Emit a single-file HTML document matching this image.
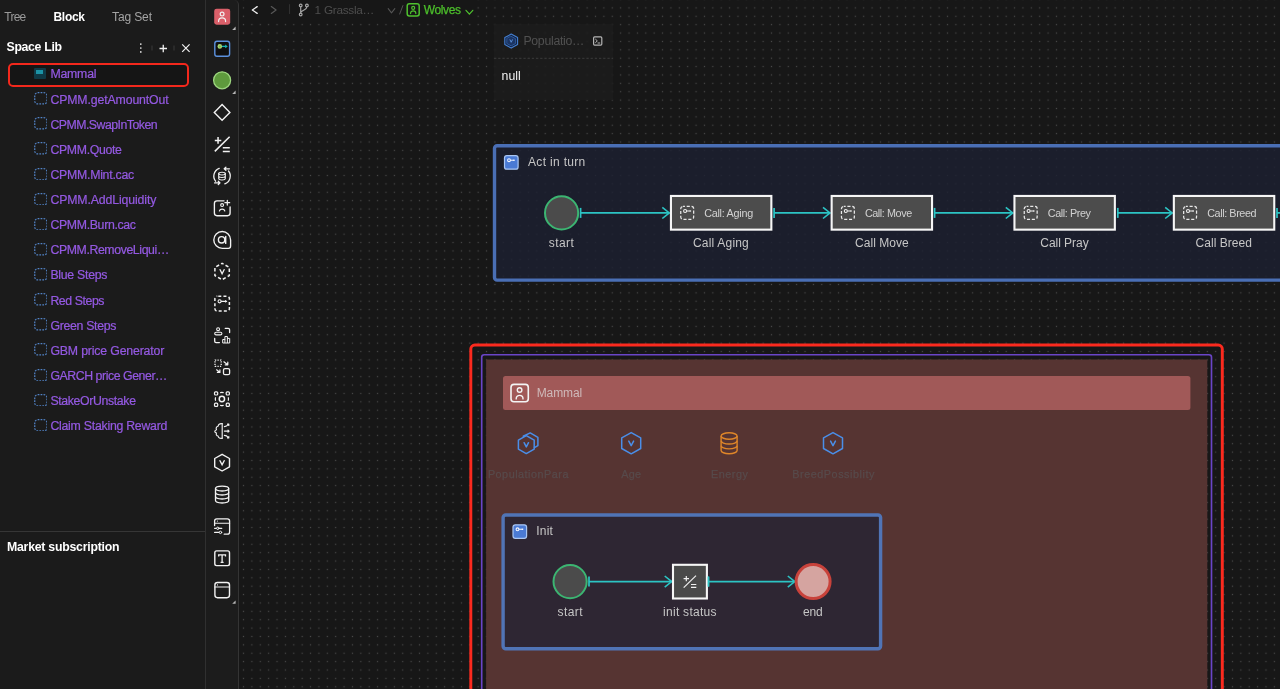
<!DOCTYPE html>
<html><head>
<meta charset="utf-8">
<title>Space Lib</title>
<style>
*{box-sizing:border-box;margin:0;padding:0}
html,body{width:1280px;height:689px;overflow:hidden;background:#181818;font-family:"Liberation Sans",sans-serif;color:#fff}
.abs{position:absolute}
#canvas{position:absolute;left:239px;top:0;width:1041px;height:689px;background-color:#171717}
#left{position:absolute;left:0;top:0;width:206px;height:689px;background:#1b1b1b;border-right:1px solid #303030}
#tool{position:absolute;left:206px;top:0;width:33px;height:689px;background:#1c1c1c;border-right:1px solid #343434;border-top-right-radius:5px}
.tab{position:absolute;top:8.84px;font-size:12px;line-height:16px;color:#9a9a9a;white-space:nowrap}
.li{position:absolute;left:50.4px;font-size:12.3px;line-height:16px;color:#9459e2;-webkit-text-stroke:0.22px #9459e2;white-space:nowrap}
.dsq{position:absolute;left:33.7px;width:13.7px;height:12.7px}
.t{position:absolute;white-space:nowrap}
.lbl{position:absolute;white-space:nowrap;font-size:13px;line-height:16px;color:#d6d6d6;text-align:center;transform:translateX(-50%)}
.call{position:absolute;height:35px;background:#4b4b4b;border:2px solid #fff}
.call span{position:absolute;top:9px;font-size:11px;line-height:14px;color:#e0e0e0;white-space:nowrap}
</style>
</head>
<body>
<div id="root" style="position:absolute;left:0;top:0;width:1280px;height:689px;will-change:transform">
<div id="canvas"><svg width="1041" height="689" viewBox="239 0 1041 689" style="position:absolute;left:0;top:0">
<defs><pattern id="dots" x="239.31" y="3.71" width="8.381" height="8.381" patternUnits="userSpaceOnUse"><rect x="3.6" y="3.6" width="1.18" height="1.18" fill="#4b4b4b"></rect></pattern></defs>
<rect x="239" y="0" width="1041" height="689" fill="url(#dots)"></rect></svg></div>

<!-- LEFT PANEL -->
<div id="left">
  <div class="tab" style="left: 4.3px; letter-spacing: -0.745px;">Tree</div>
  <div class="tab" style="left: 53.5px; color: rgb(255, 255, 255); font-weight: bold; letter-spacing: -0.297px;">Block</div>
  <div class="tab" style="left: 112px; color: rgb(164, 164, 164); letter-spacing: -0.117px;">Tag Set</div>
  <div class="t" style="left: 6.5px; top: 39.24px; font-size: 12.3px; line-height: 16px; font-weight: bold; letter-spacing: -0.324px;">Space Lib</div>
  <!-- LEFT-ICONS -->
  <svg class="abs" style="left:136px;top:40px;width:60px;height:16px" viewBox="0 0 60 16">
    <g fill="#e8e8e8"><circle cx="4.8" cy="4.1" r="0.85"></circle><circle cx="4.8" cy="8" r="0.85"></circle><circle cx="4.8" cy="11.9" r="0.85"></circle></g>
    <path d="M16 5.5V10.5M38 5.5V10.5" stroke="#3a3a3a" stroke-width="1"></path>
    <path d="M23.5 8.5H31M27.25 4.7V12.3" stroke="#f0f0f0" stroke-width="1.3" fill="none"></path>
    <path d="M46.2 4.4L53.6 11.8M53.6 4.4L46.2 11.8" stroke="#f0f0f0" stroke-width="1.2" fill="none"></path>
  </svg>
  <!-- LIST -->
  <div class="abs" style="left:8px;top:63px;width:181px;height:24px;border:2px solid #f3281c;border-radius:5px;background:#151515"></div>
  <div class="abs" style="left:34px;top:68.3px;width:12px;height:11px;background:#0f3a46;border-radius:1px"><div class="abs" style="left:2px;top:1.5px;width:7px;height:4px;background:#1c93a6"></div></div>
  <div class="li" style="top: 66.3px; letter-spacing: -0.208px;">Mammal</div>
  <svg class="dsq" style="top:92.1px" viewBox="0 0 13.7 12.7"><rect x="0.75" y="0.75" width="12.2" height="11.2" rx="2.9" fill="none" stroke="#5283c6" stroke-width="1.25" stroke-dasharray="1.75 1.2"></rect></svg>
  <div class="li" style="top: 91.5px; letter-spacing: -0.124px;">CPMM.getAmountOut</div>
  <svg class="dsq" style="top:117.3px" viewBox="0 0 13.7 12.7"><rect x="0.75" y="0.75" width="12.2" height="11.2" rx="2.9" fill="none" stroke="#5283c6" stroke-width="1.25" stroke-dasharray="1.75 1.2"></rect></svg>
  <div class="li" style="top: 116.6px; letter-spacing: -0.502px;">CPMM.SwapInToken</div>
  <svg class="dsq" style="top:142.4px" viewBox="0 0 13.7 12.7"><rect x="0.75" y="0.75" width="12.2" height="11.2" rx="2.9" fill="none" stroke="#5283c6" stroke-width="1.25" stroke-dasharray="1.75 1.2"></rect></svg>
  <div class="li" style="top: 141.7px; letter-spacing: -0.332px;">CPMM.Quote</div>
  <svg class="dsq" style="top:167.5px" viewBox="0 0 13.7 12.7"><rect x="0.75" y="0.75" width="12.2" height="11.2" rx="2.9" fill="none" stroke="#5283c6" stroke-width="1.25" stroke-dasharray="1.75 1.2"></rect></svg>
  <div class="li" style="top: 166.9px; letter-spacing: -0.248px;">CPMM.Mint.cac</div>
  <svg class="dsq" style="top:192.7px" viewBox="0 0 13.7 12.7"><rect x="0.75" y="0.75" width="12.2" height="11.2" rx="2.9" fill="none" stroke="#5283c6" stroke-width="1.25" stroke-dasharray="1.75 1.2"></rect></svg>
  <div class="li" style="top: 192px; letter-spacing: -0.124px;">CPMM.AddLiquidity</div>
  <svg class="dsq" style="top:217.8px" viewBox="0 0 13.7 12.7"><rect x="0.75" y="0.75" width="12.2" height="11.2" rx="2.9" fill="none" stroke="#5283c6" stroke-width="1.25" stroke-dasharray="1.75 1.2"></rect></svg>
  <div class="li" style="top: 217.1px; letter-spacing: -0.326px;">CPMM.Burn.cac</div>
  <svg class="dsq" style="top:242.9px" viewBox="0 0 13.7 12.7"><rect x="0.75" y="0.75" width="12.2" height="11.2" rx="2.9" fill="none" stroke="#5283c6" stroke-width="1.25" stroke-dasharray="1.75 1.2"></rect></svg>
  <div class="li" style="top: 242.2px; letter-spacing: -0.391px;">CPMM.RemoveLiqui…</div>
  <svg class="dsq" style="top:268.0px" viewBox="0 0 13.7 12.7"><rect x="0.75" y="0.75" width="12.2" height="11.2" rx="2.9" fill="none" stroke="#5283c6" stroke-width="1.25" stroke-dasharray="1.75 1.2"></rect></svg>
  <div class="li" style="top: 267.4px; letter-spacing: -0.265px;">Blue Steps</div>
  <svg class="dsq" style="top:293.2px" viewBox="0 0 13.7 12.7"><rect x="0.75" y="0.75" width="12.2" height="11.2" rx="2.9" fill="none" stroke="#5283c6" stroke-width="1.25" stroke-dasharray="1.75 1.2"></rect></svg>
  <div class="li" style="top: 292.5px; letter-spacing: -0.415px;">Red Steps</div>
  <svg class="dsq" style="top:318.3px" viewBox="0 0 13.7 12.7"><rect x="0.75" y="0.75" width="12.2" height="11.2" rx="2.9" fill="none" stroke="#5283c6" stroke-width="1.25" stroke-dasharray="1.75 1.2"></rect></svg>
  <div class="li" style="top: 317.6px; letter-spacing: -0.305px;">Green Steps</div>
  <svg class="dsq" style="top:343.4px" viewBox="0 0 13.7 12.7"><rect x="0.75" y="0.75" width="12.2" height="11.2" rx="2.9" fill="none" stroke="#5283c6" stroke-width="1.25" stroke-dasharray="1.75 1.2"></rect></svg>
  <div class="li" style="top: 342.8px; letter-spacing: -0.165px;">GBM price Generator</div>
  <svg class="dsq" style="top:368.6px" viewBox="0 0 13.7 12.7"><rect x="0.75" y="0.75" width="12.2" height="11.2" rx="2.9" fill="none" stroke="#5283c6" stroke-width="1.25" stroke-dasharray="1.75 1.2"></rect></svg>
  <div class="li" style="top: 367.9px; letter-spacing: -0.434px;">GARCH price Gener…</div>
  <svg class="dsq" style="top:393.7px" viewBox="0 0 13.7 12.7"><rect x="0.75" y="0.75" width="12.2" height="11.2" rx="2.9" fill="none" stroke="#5283c6" stroke-width="1.25" stroke-dasharray="1.75 1.2"></rect></svg>
  <div class="li" style="top: 393px; letter-spacing: -0.355px;">StakeOrUnstake</div>
  <svg class="dsq" style="top:418.8px" viewBox="0 0 13.7 12.7"><rect x="0.75" y="0.75" width="12.2" height="11.2" rx="2.9" fill="none" stroke="#5283c6" stroke-width="1.25" stroke-dasharray="1.75 1.2"></rect></svg>
  <div class="li" style="top: 418.2px; letter-spacing: -0.245px;">Claim Staking Reward</div>
  <!-- /LIST -->
  <div class="abs" style="left:0;top:531px;width:205px;height:1px;background:#363636"></div>
  <div class="t" style="left: 7px; top: 538.74px; font-size: 12.3px; line-height: 16px; font-weight: bold; letter-spacing: -0.242px;">Market subscription</div>
</div>

<!-- TOOLBAR -->
<div id="tool">
<!-- TOOL-ICONS -->
<svg class="abs" style="left:0;top:0;width:33px;height:689px" viewBox="206 0 33 689" fill="none" stroke="#f2f2f2" stroke-width="1.35" stroke-linecap="round" stroke-linejoin="round">
  <!-- 1 person red -->
  <rect x="214.2" y="8.7" width="16" height="16" rx="2.4" fill="#da5f69" stroke="none"></rect>
  <circle cx="222.1" cy="14.1" r="1.9" stroke-width="1.2"></circle>
  <path d="M218.6 21.6v-0.4a3.5 3.3 0 0 1 7 0v0.4" stroke-width="1.2"></path>
  <path d="M235.6 26.6V29.9H232.2Z" fill="#b5b5b5" stroke="none"></path>
  <!-- 2 blue box -->
  <rect x="214.8" y="41.3" width="14.8" height="14.9" rx="2.2" fill="#101010" stroke="#5c91de" stroke-width="1.4"></rect>
  <path d="M221.5 46.4H226" stroke="#17b6b6" stroke-width="1.3" stroke-linecap="butt"></path>
  <path d="M225.2 44.6L227.8 46.4L225.2 48.2Z" fill="#17b6b6" stroke="none"></path>
  <circle cx="219.8" cy="46.4" r="2.3" fill="#a9d873" stroke="none"></circle>
  <circle cx="219.8" cy="46.4" r="1" fill="#7fb34c" stroke="none"></circle>
  <!-- 3 green circle -->
  <circle cx="222.1" cy="80.3" r="8.5" fill="#5e9a3d" stroke="#9dd67f" stroke-width="1.3"></circle>
  <path d="M235.6 90.6V93.9H232.2Z" fill="#b5b5b5" stroke="none"></path>
  <!-- 4 diamond -->
  <path d="M222.1 104.6L229.9 112.4L222.1 120.2L214.3 112.4Z" stroke-width="1.4" stroke-linejoin="miter"></path>
  <!-- 5 plus slash equal -->
  <g stroke-width="1.5" stroke-linecap="butt">
  <path d="M214.8 151.4L229.6 136.8"></path>
  <path d="M214.8 140.4H221.3M218.05 137.1V143.7"></path>
  <path d="M222.8 147.8H229.8M222.8 151.4H229.8"></path>
  </g>
  <!-- 6 coin cycle -->
  <g stroke-width="1.3">
  <path d="M219.2 168.3A8.3 8.3 0 0 0 215.6 181.2"></path>
  <path d="M224.8 183.9A8.3 8.3 0 0 0 228.5 171"></path>
  <path d="M229.4 168.8H224.4M225.9 167.2L224.2 168.8L225.9 170.4"></path>
  <path d="M214.6 182.9H219.8M218.3 181.3L220 182.9L218.3 184.5"></path>
  <ellipse cx="222" cy="173.6" rx="3.3" ry="1.4" stroke-width="1.1"></ellipse>
  <path d="M218.7 173.6V178.6A3.3 1.4 0 0 0 225.3 178.6V173.6M218.7 176.1A3.3 1.4 0 0 0 225.3 176.1" stroke-width="1.1"></path>
  </g>
  <!-- 7 person plus -->
  <path d="M224 200.8H217A2.6 2.6 0 0 0 214.4 203.4V213.1A2.6 2.6 0 0 0 217 215.7H227.5A2.6 2.6 0 0 0 230.1 213.1V206.8"></path>
  <path d="M224.9 202.7H229.7M227.3 200.3V205.1" stroke-width="1.2"></path>
  <circle cx="222.1" cy="205.1" r="1.45" stroke-width="1.1"></circle>
  <path d="M219.4 211A2.8 2.6 0 0 1 224.8 211" stroke-width="1.2"></path>
  <!-- 8 at -->
  <path d="M222.2 231.5A8.4 8.4 0 1 0 222.2 248.3H228.4A2.2 2.2 0 0 0 230.6 246.1V239.9A8.4 8.4 0 0 0 222.2 231.5Z"></path>
  <circle cx="221.6" cy="239.8" r="3.2" stroke-width="1.4"></circle>
  <path d="M225.7 236.4V243.4" stroke-width="1.4"></path>
  <!-- 9 dashed hex v -->
  <path d="M222.1 263.3L229.3 267.4V275.6L222.1 279.7L214.9 275.6V267.4Z" stroke-dasharray="3.3 2.25" stroke-dashoffset="1.6" stroke-width="1.5" stroke-linecap="butt"></path>
  <path d="M220.1 269.7L222.1 273.7L224.1 269.7" stroke-width="1.3" stroke-linejoin="miter"></path>
  <!-- 10 dashed box key -->
  <rect x="214.9" y="296.2" width="14.5" height="14.9" rx="2.4" stroke-dasharray="3 2.15" stroke-dashoffset="-1" stroke-width="1.5" stroke-linecap="butt"></rect>
  <circle cx="219.6" cy="301.3" r="1.55" stroke-width="1.1"></circle>
  <path d="M221.3 301.3H226.6M225.6 300.6V302" stroke-width="1.2"></path>
  <!-- 11 person chart -->
  <g stroke-width="1.3">
  <circle cx="218.1" cy="329.2" r="1.45" stroke-width="1.1"></circle>
  <rect x="214.7" y="332.2" width="7.2" height="2.7" rx="1.35" stroke-width="1.1"></rect>
  <path d="M225.2 328.3H228.2A1.4 1.4 0 0 1 229.6 329.7V332.6"></path>
  <path d="M214.7 338.4V341.2A1.4 1.4 0 0 0 216.1 342.6H219.4"></path>
  <path d="M222.7 342.6V339.5H224.9V336.5H227.4V338.4H229.7V342.6ZM224.9 339.5V342.6M227.4 338.4V342.6" stroke-width="1"></path>
  </g>
  <!-- 12 dots arrows -->
  <rect x="215" y="360.1" width="6.2" height="6.2" stroke-dasharray="1.25 1.23" stroke-width="1.3" stroke-linecap="butt"></rect>
  <path d="M223.9 361.8L227.4 364.4M227.8 362.2V364.8H225.2" stroke-width="1.2"></path>
  <path d="M216.6 369.8L219.4 371.9M219.9 369.9V372.4H217.4" stroke-width="1.2"></path>
  <rect x="223.5" y="368.6" width="6.1" height="6.1" rx="1.5" stroke-width="1.3"></rect>
  <!-- 13 gear -->
  <circle cx="221.9" cy="399" r="2.65" stroke-width="1.5"></circle>
  <g stroke-width="1.2">
  <rect x="214.5" y="391.8" width="3.2" height="3.2" rx="1"></rect><rect x="226.2" y="391.8" width="3.2" height="3.2" rx="1"></rect>
  <rect x="214.5" y="403.2" width="3.2" height="3.2" rx="1"></rect><rect x="226.2" y="403.2" width="3.2" height="3.2" rx="1"></rect>
  <path d="M220.6 392.6A4.5 4.5 0 0 1 223.2 392.6M220.6 405.4A4.5 4.5 0 0 0 223.2 405.4M215.5 397.7A4.5 4.5 0 0 0 215.5 400.3M228.3 397.7A4.5 4.5 0 0 1 228.3 400.3"></path>
  </g>
  <!-- 14 brain -->
  <g stroke-width="1.15">
  <path d="M222.2 423.6V438.3"></path>
  <path d="M222.2 423.7C219.6 423.2 218.2 424.6 218.1 426.2C216.4 426.5 215.7 428.3 216.5 429.7C214.2 430.6 214.2 432.2 216.5 433C215.7 434.4 216.6 435.9 218.1 436C218.3 437.8 220 438.7 222.2 438.2"></path>
  <path d="M224.4 426.6C226.4 426.6 227.2 425.8 228.5 424.4M227.5 424.1H228.8V425.4"></path>
  <path d="M224.4 431.1H229M228 430.1L229.1 431.1L228 432.1"></path>
  <path d="M224.4 435.4C226.4 435.4 227.2 436.2 228.5 437.6M228.8 436.6V437.9H227.5"></path>
  </g>
  <!-- 15 hex v -->
  <path d="M222.1 454.3L229.5 458.5V466.8L222.1 471L214.7 466.8V458.5Z" stroke-width="1.4"></path>
  <path d="M220 460.7L222.1 464.8L224.2 460.7" stroke-width="1.4" stroke-linejoin="miter"></path>
  <!-- 16 database -->
  <g stroke-width="1.3">
  <ellipse cx="222.1" cy="488.6" rx="6.6" ry="2.4"></ellipse>
  <path d="M215.5 488.6V500.6A6.6 2.4 0 0 0 228.7 500.6V488.6"></path>
  <path d="M215.5 492.6A6.6 2.4 0 0 0 228.7 492.6M215.5 496.6A6.6 2.4 0 0 0 228.7 496.6"></path>
  </g>
  <!-- 17 window sliders -->
  <g stroke-width="1.3">
  <path d="M214.6 525.6V521A2.2 2.2 0 0 1 216.8 518.8H227.4A2.2 2.2 0 0 1 229.6 521V532A2.2 2.2 0 0 1 227.4 534.2H224.2"></path>
  <path d="M214.6 523.2H229.6" stroke-width="1.1"></path>
  <circle cx="217.4" cy="521.1" r="0.6" fill="#f2f2f2" stroke="none"></circle>
  <path d="M214.6 528.3H221.8M214.6 532.4H219.3" stroke-width="1.2"></path>
  <circle cx="217.8" cy="528.3" r="1.2" fill="#1c1c1c" stroke-width="1"></circle>
  <circle cx="220.5" cy="532.4" r="1.2" fill="#1c1c1c" stroke-width="1"></circle>
  </g>
  <!-- 18 T -->
  <rect x="214.8" y="550.9" width="14.7" height="14.7" rx="1.8" stroke-width="1.4"></rect>
  <path d="M218.7 556.6V554.9H225.5V556.6M222.1 554.9V562.2M220.6 562.3H223.6" stroke-width="1.3" stroke-linecap="butt" stroke-linejoin="miter"></path>
  <!-- 19 window -->
  <rect x="214.9" y="582.5" width="14.6" height="15.2" rx="2.6" stroke-width="1.4"></rect>
  <path d="M214.9 587H229.5" stroke-width="1.2"></path>
  <circle cx="217.5" cy="584.9" r="0.6" fill="#f2f2f2" stroke="none"></circle>
  <path d="M235.6 600.4V603.8H232.2Z" fill="#b5b5b5" stroke="none"></path>
</svg>
<!-- /TOOL-ICONS -->
</div>

<!-- BREADCRUMB -->
<div id="crumb" class="abs" style="left:246px;top:0;width:230px;height:21px;background:#171717">
  <svg class="abs" style="left:0;top:0;width:230px;height:21px" viewBox="246 0 230 21" fill="none" stroke-linecap="round" stroke-linejoin="round">
    <path d="M257.2 6.6L252.3 10L257.2 13.4" stroke="#ececec" stroke-width="1.3"></path>
    <path d="M271.3 6.6L276.1 10L271.3 13.4" stroke="#585858" stroke-width="1.2"></path>
    <path d="M289.6 4.6V13.6" stroke="#333" stroke-width="1"></path>
    <g stroke="#a6a6a6" stroke-width="1.2">
      <circle cx="300.7" cy="5.4" r="1.35"></circle><circle cx="306.9" cy="5.4" r="1.35"></circle><circle cx="300.7" cy="14.5" r="1.35"></circle>
      <path d="M300.7 6.8V13.1M306.9 6.8C306.9 9.6 303 10 300.7 12.2"></path>
    </g>
    <path d="M388.2 8.7L391.5 12.8L394.8 8.7" stroke="#555" stroke-width="1.1"></path>
    <path d="M402.9 5.6L399.7 14" stroke="#555" stroke-width="1"></path>
    <rect x="407.2" y="3.8" width="12" height="12.2" rx="2.2" stroke="#4fc22e" stroke-width="1.5"></rect>
    <circle cx="413.2" cy="7.9" r="1.5" stroke="#4fc22e" stroke-width="1.2"></circle>
    <path d="M410.6 13.6v-0.3a2.6 2.5 0 0 1 5.2 0v0.3" stroke="#4fc22e" stroke-width="1.2"></path>
    <path d="M466 10.3L469.4 14.2L472.8 10.3" stroke="#4fc22e" stroke-width="1.2"></path>
  </svg>
  <div class="t" style="left: 68.6px; top: 1.91px; font-size: 11.8px; line-height: 16px; color: rgb(78, 78, 78); letter-spacing: -0.276px;">1 Grassla…</div>
  <div class="t" style="left: 177.8px; top: 1.84px; font-size: 12px; line-height: 16px; color: rgb(76, 191, 43); -webkit-text-stroke: 0.25px rgb(76, 191, 43); letter-spacing: -0.385px;">Wolves</div>
</div>
<!-- /BREADCRUMB -->

<!-- POPULATION -->
<div class="abs" style="left:494px;top:24px;width:119px;height:76px;background:rgba(29,29,29,0.88)">
    <svg class="abs" style="left:0;top:0;width:119px;height:40px" viewBox="494 24 119 40" fill="none" stroke-linejoin="round" stroke-linecap="round">
    <path d="M494 58.3H613" stroke="#3b3b3b" stroke-width="1" stroke-dasharray="2.3 1.9" stroke-linecap="butt"></path>
    <path d="M511.2 34.1L517.6 37.6V44.6L511.2 48.1L504.8 44.6V37.6Z" stroke="#447fd2" stroke-width="1.1" fill="#14213a"></path>
    <path d="M511.2 36.3L515.6 38.7V43.5L511.2 45.9L506.8 43.5V38.7Z" stroke="#3163ae" stroke-width="0.8" fill="#1b3462"></path>
    <path d="M510 39.8L511.2 42.3L512.4 39.8" stroke="#5e95e0" stroke-width="0.9"></path>
    <rect x="593.6" y="36.9" width="8.2" height="8.2" rx="1" stroke="#b4b4b4" stroke-width="1.2"></rect>
    <path d="M595.6 39.3L597.3 40.9L595.6 42.5M598 43H599.8" stroke="#c8c8c8" stroke-width="0.9"></path>
  </svg>
  <div class="t" style="left: 29.4px; top: 9.24px; font-size: 12.3px; line-height: 16px; color: rgb(80, 80, 80); letter-spacing: -0.286px;">Populatio…</div>
  <div class="t" style="left: 7.5px; top: 43.74px; font-size: 12.3px; line-height: 16px; color: rgb(242, 242, 242); letter-spacing: 0.048px;">null</div>
</div>
<!-- /POPULATION -->
<!-- ACT -->
<svg class="abs" style="left:0;top:0;width:1280px;height:689px;pointer-events:none" viewBox="0 0 1280 689">
  <rect x="494.5" y="145.7" width="800" height="134.4" rx="2.6" fill="rgba(29,32,49,0.84)" stroke="#4a6fb5" stroke-width="3.4"></rect>
  <rect x="504.5" y="155.7" width="13.6" height="13.5" rx="2.3" fill="#4a7ad4" stroke="#a9c6f3" stroke-width="1.2"></rect>
    <circle cx="509.0" cy="160.2" r="1.4" fill="none" stroke="#f4f7ff" stroke-width="1.1"></circle>
    <path d="M510.5 160.2H514.8M513.8 159.5V161.0" stroke="#f4f7ff" stroke-width="1.1" fill="none"></path>
  <circle cx="561.6" cy="212.9" r="16.6" fill="#4b4b4b" stroke="#3cb572" stroke-width="2"></circle>
  <path d="M580.6 207.9V217.9" stroke="#2cc4c4" stroke-width="1.7" fill="none"></path><path d="M580.6 212.9H669.1" stroke="#2cc4c4" stroke-width="1.6" fill="none"></path><path d="M662.3 207.3L669.3 212.9L662.3 218.5" stroke="#2cc4c4" stroke-width="1.6" fill="none" stroke-linejoin="miter"></path>
  
    <rect x="670.95" y="195.95" width="100.4" height="33.7" fill="#4c4c4c" stroke="#f6f6f6" stroke-width="2.1"></rect>
    <rect x="680.75" y="206.45" width="12.9" height="12.9" rx="2.3" fill="none" stroke="#e8e8e8" stroke-width="1.25" stroke-dasharray="3.1 1.75" stroke-dashoffset="1.2"></rect>
    <circle cx="685.10" cy="211.00" r="1.5" fill="none" stroke="#f0f0f0" stroke-width="1.1"></circle>
    <path d="M686.70 211.00H691.10M690.10 210.20V211.80" stroke="#f0f0f0" stroke-width="1.1" fill="none"></path>
  <path d="M774.1 207.9V217.9" stroke="#2cc4c4" stroke-width="1.7" fill="none"></path><path d="M774.1 212.9H829.8" stroke="#2cc4c4" stroke-width="1.6" fill="none"></path><path d="M823.0 207.3L830.0 212.9L823.0 218.5" stroke="#2cc4c4" stroke-width="1.6" fill="none" stroke-linejoin="miter"></path>
  
    <rect x="831.65" y="195.95" width="100.4" height="33.7" fill="#4c4c4c" stroke="#f6f6f6" stroke-width="2.1"></rect>
    <rect x="841.45" y="206.45" width="12.9" height="12.9" rx="2.3" fill="none" stroke="#e8e8e8" stroke-width="1.25" stroke-dasharray="3.1 1.75" stroke-dashoffset="1.2"></rect>
    <circle cx="845.80" cy="211.00" r="1.5" fill="none" stroke="#f0f0f0" stroke-width="1.1"></circle>
    <path d="M847.40 211.00H851.80M850.80 210.20V211.80" stroke="#f0f0f0" stroke-width="1.1" fill="none"></path>
  <path d="M934.6 207.9V217.9" stroke="#2cc4c4" stroke-width="1.7" fill="none"></path><path d="M934.6 212.9H1012.6" stroke="#2cc4c4" stroke-width="1.6" fill="none"></path><path d="M1005.8 207.3L1012.8 212.9L1005.8 218.5" stroke="#2cc4c4" stroke-width="1.6" fill="none" stroke-linejoin="miter"></path>
  
    <rect x="1014.45" y="195.95" width="100.4" height="33.7" fill="#4c4c4c" stroke="#f6f6f6" stroke-width="2.1"></rect>
    <rect x="1024.25" y="206.45" width="12.9" height="12.9" rx="2.3" fill="none" stroke="#e8e8e8" stroke-width="1.25" stroke-dasharray="3.1 1.75" stroke-dashoffset="1.2"></rect>
    <circle cx="1028.60" cy="211.00" r="1.5" fill="none" stroke="#f0f0f0" stroke-width="1.1"></circle>
    <path d="M1030.20 211.00H1034.60M1033.60 210.20V211.80" stroke="#f0f0f0" stroke-width="1.1" fill="none"></path>
  <path d="M1117.8 207.9V217.9" stroke="#2cc4c4" stroke-width="1.7" fill="none"></path><path d="M1117.8 212.9H1172.0" stroke="#2cc4c4" stroke-width="1.6" fill="none"></path><path d="M1165.2 207.3L1172.2 212.9L1165.2 218.5" stroke="#2cc4c4" stroke-width="1.6" fill="none" stroke-linejoin="miter"></path>
  
    <rect x="1173.85" y="195.95" width="100.4" height="33.7" fill="#4c4c4c" stroke="#f6f6f6" stroke-width="2.1"></rect>
    <rect x="1183.65" y="206.45" width="12.9" height="12.9" rx="2.3" fill="none" stroke="#e8e8e8" stroke-width="1.25" stroke-dasharray="3.1 1.75" stroke-dashoffset="1.2"></rect>
    <circle cx="1188.00" cy="211.00" r="1.5" fill="none" stroke="#f0f0f0" stroke-width="1.1"></circle>
    <path d="M1189.60 211.00H1194.00M1193.00 210.20V211.80" stroke="#f0f0f0" stroke-width="1.1" fill="none"></path>
  <path d="M1277 207.9V217.9M1277 212.9H1281" stroke="#2cc4c4" stroke-width="1.7" fill="none"></path>
</svg>
<div class="t" style="left: 528px; top: 154.24px; font-size: 12px; line-height: 16px; color: rgb(198, 198, 198); letter-spacing: 0.327px;">Act in turn</div>
<div class="t" style="left: 548.8px; top: 235.34px; font-size: 12px; line-height: 16px; color: rgb(198, 198, 198); letter-spacing: 0.414px;">start</div>
<div class="t" style="left: 693px; top: 235.34px; font-size: 12px; line-height: 16px; color: rgb(198, 198, 198); letter-spacing: 0.195px;">Call Aging</div>
<div class="t" style="left: 855px; top: 235.34px; font-size: 12px; line-height: 16px; color: rgb(198, 198, 198); letter-spacing: 0.055px;">Call Move</div>
<div class="t" style="left: 1040.3px; top: 235.34px; font-size: 12px; line-height: 16px; color: rgb(198, 198, 198); letter-spacing: -0.036px;">Call Pray</div>
<div class="t" style="left: 1195.6px; top: 235.34px; font-size: 12px; line-height: 16px; color: rgb(198, 198, 198); letter-spacing: 0.03px;">Call Breed</div>
<div class="t" style="left: 704.2px; top: 204.56px; font-size: 10.8px; line-height: 16px; color: rgb(210, 210, 210); letter-spacing: -0.263px;">Call: Aging</div>
<div class="t" style="left: 864.9px; top: 204.56px; font-size: 10.8px; line-height: 16px; color: rgb(210, 210, 210); letter-spacing: -0.413px;">Call: Move</div>
<div class="t" style="left: 1047.8px; top: 204.56px; font-size: 10.8px; line-height: 16px; color: rgb(210, 210, 210); letter-spacing: -0.401px;">Call: Prey</div>
<div class="t" style="left: 1207.2px; top: 204.56px; font-size: 10.8px; line-height: 16px; color: rgb(210, 210, 210); letter-spacing: -0.402px;">Call: Breed</div>
<!-- /ACT -->
<!-- MAMMAL -->
<svg class="abs" style="left:0;top:0;width:1280px;height:689px;pointer-events:none" viewBox="0 0 1280 689" fill="none">
  <rect x="470.8" y="345" width="751.5" height="400" rx="4" stroke="#fb2a1e" stroke-width="2.95"></rect>
  <rect x="481.7" y="354.75" width="729.8" height="400" rx="2.5" stroke="#6a45c8" stroke-width="1.65"></rect>
  <rect x="486.1" y="359.5" width="721.2" height="400" fill="#563432"></rect>
  <rect x="503" y="376" width="687.4" height="34" rx="2.5" fill="#a15958"></rect>
  <rect x="503.1" y="515" width="377.5" height="133.7" rx="2.6" fill="#2e2633" stroke="#5074b6" stroke-width="3.4"></rect>
</svg>
<svg class="abs" style="left:0;top:0;width:1280px;height:689px;pointer-events:none" viewBox="0 0 1280 689" fill="none">
  <rect x="511" y="384.4" width="17.3" height="17.4" rx="3" stroke="#f4f4f4" stroke-width="1.6"></rect>
  <circle cx="519.6" cy="390" r="2.3" stroke="#f4f4f4" stroke-width="1.4"></circle>
  <path d="M516.2 398.9v-0.2a3.4 3.3 0 0 1 6.8 0v0.2" stroke="#f4f4f4" stroke-width="1.4" stroke-linecap="round"></path>
  <g stroke="#4a8ee8" stroke-width="1.5" stroke-linejoin="round" stroke-linecap="round">
    <path d="M523.2 436.2L530.2 432.9L537.9 437.4V445.6L534.4 447.6"></path>
    <path d="M526.3 435.6L534.2 440.1V449.1L526.3 453.6L518.4 449.1V440.1Z"></path>
    <path d="M524.1 442.7L526.3 446.9L528.5 442.7"></path>
    <path d="M631.2 432.6L640.7 437.9V448.5L631.2 453.8L621.7 448.5V437.9Z"></path>
    <path d="M628.8 441.1L631.2 445.7L633.6 441.1"></path>
    <path d="M833.0 432.6L842.5 437.9V448.5L833.0 453.8L823.5 448.5V437.9Z"></path>
    <path d="M830.6 441.1L833.0 445.7L835.4 441.1"></path>
  </g>
  <g stroke="#df8629" stroke-width="1.4">
    <ellipse cx="729.1" cy="436" rx="8" ry="3.2"></ellipse>
    <path d="M721.1 436V450.5A8 3.2 0 0 0 737.1 450.5V436"></path>
    <path d="M721.1 440.8A8 3.2 0 0 0 737.1 440.8M721.1 445.7A8 3.2 0 0 0 737.1 445.7"></path>
  </g>
  <rect x="513.0" y="524.8" width="13.6" height="13.5" rx="2.3" fill="#4a7ad4" stroke="#a9c6f3" stroke-width="1.2"></rect>
    <circle cx="517.5" cy="529.3" r="1.4" fill="none" stroke="#f4f7ff" stroke-width="1.1"></circle>
    <path d="M519.0 529.3H523.3M522.3 528.6V530.1" stroke="#f4f7ff" stroke-width="1.1" fill="none"></path>
  <circle cx="570.1" cy="581.6" r="16.6" fill="#4b4b4b" stroke="#3cb572" stroke-width="2"></circle>
  <path d="M589.0 576.6V586.6" stroke="#2cc4c4" stroke-width="1.7" fill="none"></path><path d="M589.0 581.6H671.5" stroke="#2cc4c4" stroke-width="1.6" fill="none"></path><path d="M664.7 576.0L671.7 581.6L664.7 587.2" stroke="#2cc4c4" stroke-width="1.6" fill="none" stroke-linejoin="miter"></path>
  <rect x="673" y="564.8" width="33.9" height="33.7" fill="#4a4a4a" stroke="#f6f6f6" stroke-width="2.1"></rect>
  <g stroke="#f0f0f0" stroke-width="1.2">
    <path d="M683.7 587.6L696 575.6"></path>
    <path d="M683.6 578.6H689M686.3 575.9V581.3"></path>
    <path d="M691 584.5H696.3M691 587.4H696.3"></path>
  </g>
  <path d="M708.6 576.6V586.6" stroke="#2cc4c4" stroke-width="1.7" fill="none"></path><path d="M708.6 581.6H794.6" stroke="#2cc4c4" stroke-width="1.6" fill="none"></path><path d="M787.8 576.0L794.8 581.6L787.8 587.2" stroke="#2cc4c4" stroke-width="1.6" fill="none" stroke-linejoin="miter"></path>
  <path d="M708.4 576.6V586.6" stroke="#2cc4c4" stroke-width="1.2"></path>
  <circle cx="813.1" cy="581.6" r="17" fill="#d5a4a0" stroke="#c8423b" stroke-width="3"></circle>
</svg>
<div class="t" style="left: 536.7px; top: 385.04px; font-size: 12px; line-height: 16px; color: rgb(207, 186, 186); letter-spacing: -0.103px;">Mammal</div>
<div class="t" style="left: 487.9px; top: 465.76px; font-size: 10.8px; line-height: 16px; color: rgb(87, 74, 75); -webkit-text-stroke: 0.25px rgb(87, 74, 75); letter-spacing: 0.512px;">PopulationPara</div>
<div class="t" style="left: 621.2px; top: 465.76px; font-size: 10.8px; line-height: 16px; color: rgb(87, 74, 75); -webkit-text-stroke: 0.25px rgb(87, 74, 75); letter-spacing: 0.291px;">Age</div>
<div class="t" style="left: 711.1px; top: 465.76px; font-size: 10.8px; line-height: 16px; color: rgb(87, 74, 75); -webkit-text-stroke: 0.25px rgb(87, 74, 75); letter-spacing: 0.496px;">Energy</div>
<div class="t" style="left: 792.3px; top: 465.76px; font-size: 10.8px; line-height: 16px; color: rgb(87, 74, 75); -webkit-text-stroke: 0.25px rgb(87, 74, 75); letter-spacing: 0.548px;">BreedPossiblity</div>
<div class="t" style="left: 536.3px; top: 522.84px; font-size: 12px; line-height: 16px; color: rgb(198, 198, 198); letter-spacing: 0.195px;">Init</div>
<div class="t" style="left: 557.5px; top: 603.84px; font-size: 12px; line-height: 16px; color: rgb(198, 198, 198); letter-spacing: 0.414px;">start</div>
<div class="t" style="left: 663.1px; top: 603.84px; font-size: 12px; line-height: 16px; color: rgb(198, 198, 198); letter-spacing: 0.27px;">init status</div>
<div class="t" style="left: 803.1px; top: 603.84px; font-size: 12px; line-height: 16px; color: rgb(198, 198, 198); letter-spacing: -0.166px;">end</div>
<!-- /MAMMAL -->
</div>


</body></html>
